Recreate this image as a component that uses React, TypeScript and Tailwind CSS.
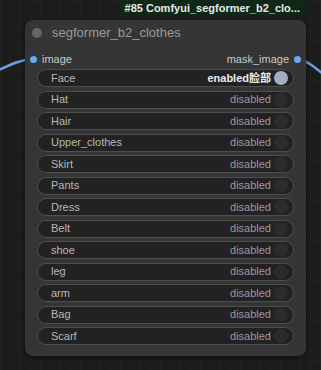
import React from "react";

const options: { label: string; enabled?: boolean; value?: string }[] = [
  { label: "Face", enabled: true, value: "enabled脸部" },
  { label: "Hat" },
  { label: "Hair" },
  { label: "Upper_clothes" },
  { label: "Skirt" },
  { label: "Pants" },
  { label: "Dress" },
  { label: "Belt" },
  { label: "shoe" },
  { label: "leg" },
  { label: "arm" },
  { label: "Bag" },
  { label: "Scarf" },
];

function ToggleRow({ label, enabled, value }: { label: string; enabled?: boolean; value?: string }) {
  return (
    <div className="h-[18px] rounded-full border border-[#4e4e4e] bg-[#222222] flex items-center pl-[13px] pr-[5px] text-[11px] leading-none">
      <span className="flex-1 text-[#b8b8b8]">{label}</span>
      <span className={enabled ? "text-[#ececec] font-bold" : "text-[#9a9a9a]"}>{enabled ? value : "disabled"}</span>
      <span className={`ml-[3px] w-[14px] h-[14px] rounded-full ${enabled ? "bg-[#a3adc2]" : "bg-[#2c2c2c]"}`} />
    </div>
  );
}

export default function App() {
  return (
    <div
      className="relative w-[321px] h-[370px] overflow-hidden bg-[#1c1c1c] bg-[linear-gradient(#222222_1px,transparent_1px),linear-gradient(90deg,#222222_1px,transparent_1px)] bg-[size:10px_10px]"
      style={{ fontFamily: '"Liberation Sans", Arial, "Noto Sans CJK SC", sans-serif' }}
    >
      {/* wires */}
      <svg className="absolute inset-0" width="321" height="370">
        <path d="M -10 74 C 8 66, 18 60, 33 59" stroke="#6aa2e0" strokeWidth="2.5" fill="none" />
        <path d="M 298 59 C 308 61, 316 68, 330 80" stroke="#6aa2e0" strokeWidth="2.5" fill="none" />
      </svg>

      {/* badge */}
      <div className="absolute top-0 right-[16px] h-[16px] px-[5px] bg-[#0e2716] text-[#e8e8e8] text-[11px] font-bold leading-[16px]">
        #85 Comfyui_segformer_b2_clo...
      </div>

      {/* node */}
      <div className="relative ml-[25px] mt-[20px] w-[281px] h-[336px] rounded-[8px] bg-[#353535] shadow-[0_2px_6px_rgba(0,0,0,0.5)]">
        <div className="h-[26px] flex items-center border-b border-[#2f2f2f]">
          <span className="ml-[7px] w-[10px] h-[10px] rounded-full bg-[#666666]" />
          <span className="ml-[10px] text-[13px] text-[#9b9b9b]">segformer_b2_clothes</span>
        </div>

        <div className="relative h-[14px] mt-[6px] flex items-center text-[11px] leading-none">
          <span className="absolute left-[5px] w-[7px] h-[7px] rounded-full bg-[#6aa9f0]" />
          <span className="ml-[17px] text-[#c8c8c8]">image</span>
          <span className="ml-auto mr-[17px] text-[#c8c8c8]">mask_image</span>
          <span className="absolute right-[5px] w-[7px] h-[7px] rounded-full bg-[#6aa9f0]" />
        </div>

        <div className="mt-[3px] px-[12px] flex flex-col gap-[3.5px]">
          {options.map((o) => (
            <ToggleRow key={o.label} {...o} />
          ))}
        </div>
      </div>
    </div>
  );
}
